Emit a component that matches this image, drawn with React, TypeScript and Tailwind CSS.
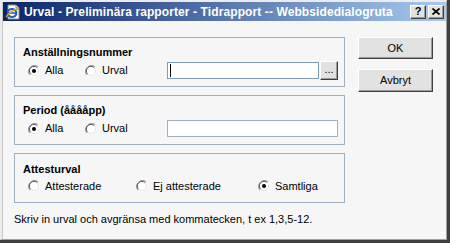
import React from "react";

const font = { fontFamily: '"Liberation Sans", Arial, sans-serif' };

function Radio({ checked }: { checked?: boolean }) {
  return (
    <svg width="12" height="12" viewBox="0 0 12 12" className="shrink-0">
      <path d="M10.2 1.8 A6 6 0 0 0 1.8 10.2" fill="none" stroke="#9a9a9a" strokeWidth="1" />
      <path d="M1.8 10.2 A6 6 0 0 0 10.2 1.8" fill="none" stroke="#ffffff" strokeWidth="1" />
      <circle cx="6" cy="6" r="4.6" fill="#ffffff" />
      <path d="M9.3 2.7 A4.6 4.6 0 0 0 2.7 9.3" fill="none" stroke="#505050" strokeWidth="1" />
      <path d="M2.7 9.3 A4.6 4.6 0 0 0 9.3 2.7" fill="none" stroke="#e4e4e4" strokeWidth="1" />
      {checked && <circle cx="6" cy="6" r="2" fill="#000000" />}
    </svg>
  );
}

function RadioItem({ checked, label, className = "" }: { checked?: boolean; label: string; className?: string }) {
  return (
    <div className={"flex items-center gap-[5px] " + className}>
      <Radio checked={checked} />
      <span className="text-[11px] leading-[13px] text-black">{label}</span>
    </div>
  );
}

function Btn3D({ children, className = "" }: { children: React.ReactNode; className?: string }) {
  return (
    <div
      className={
        "flex items-center justify-center bg-[#e2e2e2] border-t border-l border-white border-b border-r border-b-[#404040] border-r-[#404040] shadow-[inset_-1px_-1px_0_#9a9a9a] " +
        className
      }
    >
      {children}
    </div>
  );
}

function IEIcon() {
  return (
    <svg width="16" height="16" viewBox="0 0 16 16" className="shrink-0">
      <path d="M3 1 H11 L14 4 V15 H3 Z" fill="#ffffff" stroke="#8a8a8a" strokeWidth="1" />
      <path d="M11 1 V4 H14" fill="#e0e0e0" stroke="#8a8a8a" strokeWidth="1" />
      <ellipse cx="7" cy="9" rx="4.3" ry="4" fill="none" stroke="#1a5fd0" strokeWidth="2.2" />
      <path d="M3 9 H11" stroke="#1a5fd0" strokeWidth="1.6" />
      <path d="M1 13 C4 9 9 5 14 5" fill="none" stroke="#e8a000" strokeWidth="1.3" />
    </svg>
  );
}

export default function App() {
  return (
    <div style={font} className="w-[450px] h-[243px] overflow-hidden">
      <div className="w-[450px] h-[243px] flex flex-col border-r-[3px] border-b-[3px] border-[#404040] bg-[#f0f0f0]">
        <div className="flex-1 flex flex-col border-r border-b border-[#a0a0a0] border-l-[2px] border-l-[#ececec] border-t-[2px] border-t-[#ececec]">
          <div className="flex-1 flex flex-col border-l border-[#c8c8c8]">
            {/* Title bar */}
            <div className="h-[19px] flex items-center pl-[2px] pr-[2px] bg-[linear-gradient(to_right,#0a246a,#a6caf0)]">
              <IEIcon />
              <span className="ml-[3px] text-white font-bold text-[12px] leading-[14px] whitespace-nowrap tracking-[0.1px]">
                Urval - Preliminära rapporter - Tidrapport -- Webbsidedialogruta
              </span>
              <div className="ml-auto flex items-center">
                <Btn3D className="w-[16px] h-[14px]">
                  <span className="text-[11px] leading-[11px] font-bold text-black">?</span>
                </Btn3D>
                <Btn3D className="w-[16px] h-[14px] ml-[2px]">
                  <svg width="8" height="7" viewBox="0 0 8 7">
                    <path d="M0.5 0.5 L7.5 6.5 M7.5 0.5 L0.5 6.5" stroke="#000" strokeWidth="1.6" />
                  </svg>
                </Btn3D>
              </div>
            </div>

            {/* Body */}
            <div className="flex-1 bg-[#f6f6f6] flex pl-[11px] pt-[16px]">
              <div className="w-[331px] flex flex-col">
                {/* Box 1 */}
                <div className="h-[50px] border border-[#9fb0c2] flex flex-col pl-[8px] pt-[8px]">
                  <div className="text-[11px] leading-[13px] font-bold text-black">Anställningsnummer</div>
                  <div className="flex items-center mt-[3px] h-[17px]">
                    <RadioItem checked label="Alla" className="ml-[5px] w-[57px]" />
                    <RadioItem label="Urval" className="w-[82px]" />
                    <div className="w-[152px] h-[17px] bg-white border border-[#7f9db9] flex items-center pl-[2px]">
                      <div className="w-[1px] h-[13px] bg-black" />
                    </div>
                    <Btn3D className="w-[18px] h-[19px] ml-[1px]">
                      <span className="text-[11px] leading-[11px] text-black -mt-[3px]">...</span>
                    </Btn3D>
                  </div>
                </div>

                {/* Box 2 */}
                <div className="h-[50px] mt-[8px] border border-[#9fb0c2] flex flex-col pl-[8px] pt-[8px]">
                  <div className="text-[11px] leading-[13px] font-bold text-black">Period (ååååpp)</div>
                  <div className="flex items-center mt-[3px] h-[17px]">
                    <RadioItem checked label="Alla" className="ml-[5px] w-[57px]" />
                    <RadioItem label="Urval" className="w-[82px]" />
                    <div className="w-[171px] h-[17px] bg-white border border-[#9fb0c2]" />
                  </div>
                </div>

                {/* Box 3 */}
                <div className="h-[50px] mt-[8px] border border-[#9fb0c2] flex flex-col pl-[8px] pt-[9px]">
                  <div className="text-[11px] leading-[13px] font-bold text-black">Attesturval</div>
                  <div className="flex items-center mt-[3px] h-[14px]">
                    <RadioItem label="Attesterade" className="ml-[5px] w-[108px] gap-[2px]" />
                    <RadioItem label="Ej attesterade" className="w-[122px] gap-[-1px]" />
                    <RadioItem checked label="Samtliga" className="gap-[1px]" />
                  </div>
                </div>

                <div className="mt-[10px] text-[11px] leading-[13px] text-black whitespace-nowrap">
                  Skriv in urval och avgränsa med kommatecken, t ex 1,3,5-12.
                </div>
              </div>

              {/* Buttons */}
              <div className="ml-[13px] flex flex-col">
                <Btn3D className="w-[75px] h-[22px]">
                  <span className="text-[11px] leading-[13px] text-black">OK</span>
                </Btn3D>
                <Btn3D className="w-[75px] h-[23px] mt-[10px]">
                  <span className="text-[11px] leading-[13px] text-black">Avbryt</span>
                </Btn3D>
              </div>
            </div>
          </div>
        </div>
      </div>
    </div>
  );
}
